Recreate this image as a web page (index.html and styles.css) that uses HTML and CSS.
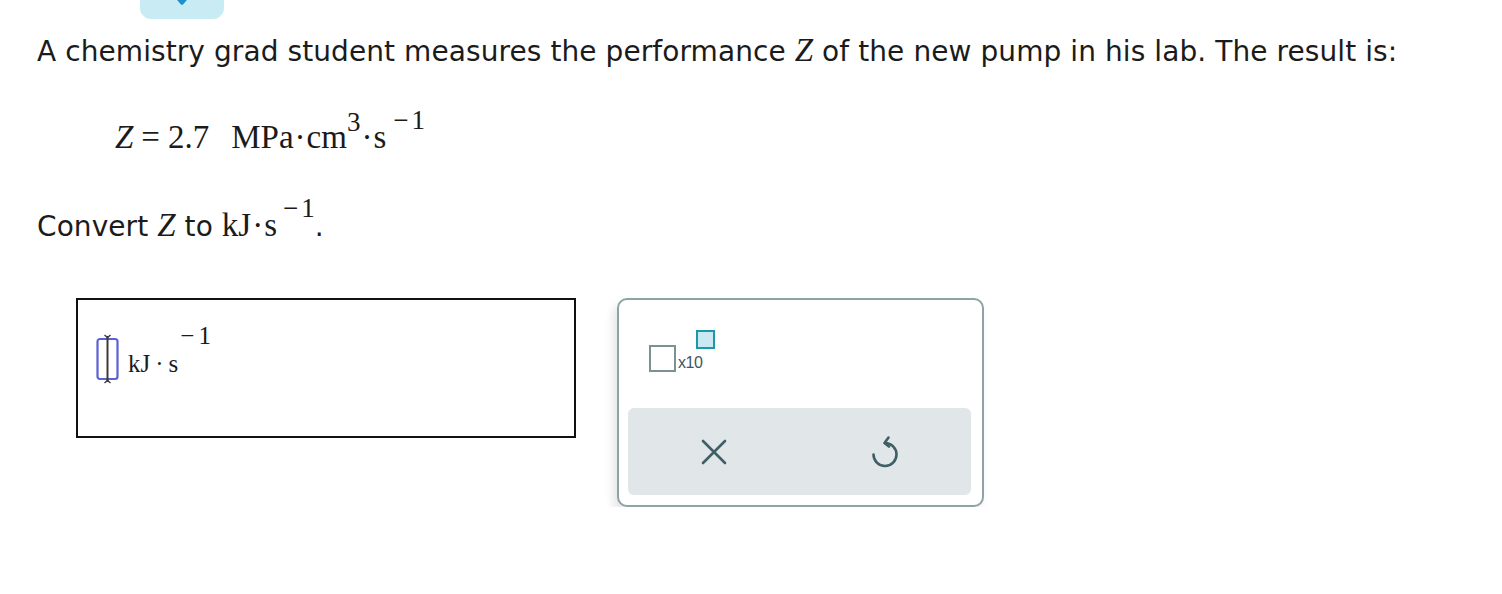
FILE: index.html
```html
<!DOCTYPE html>
<html>
<head>
<meta charset="utf-8">
<link rel="stylesheet" href="styles.css">
</head>
<body>
<div class="tab">
  <svg class="chev" width="20" height="6" viewBox="0 0 20 6"><path d="M4 -4 L10 3 L16 -4" fill="none" stroke="#1b93c8" stroke-width="3.5" stroke-linecap="round" stroke-linejoin="round"/></svg>
</div>
<div class="content">
  <p class="q line1">A chemistry grad student measures the performance <span class="mi">Z</span> of the new pump in his lab. The result is:</p>
  <div class="eq"><span class="eqi">Z</span><span class="rel">=</span>2.7<span class="sp"></span>MPa<span class="dot">·</span>cm<sup class="s3">3</sup><span class="dot">·</span>s<sup class="sm"><span class="minus">−</span>1</sup></div>
  <p class="q line2">Convert <span class="mi">Z</span> to <span class="unit">kJ<span class="dot">·</span>s<sup class="sm2"><span class="minus">−</span>1</sup></span>.</p>
  <div class="work">
    <div class="answer">
      <svg class="cursor" width="26" height="56" viewBox="0 0 26 56">
        <rect x="2.5" y="7" width="20" height="40" rx="2.5" fill="#fff" stroke="#5b60d6" stroke-width="2.2"/>
        <line x1="12.5" y1="4" x2="12.5" y2="50" stroke="#3a3a3a" stroke-width="2"/>
        <path d="M9.5 3 L12.5 5.5 L15.5 3 M9.5 51 L12.5 48.5 L15.5 51" fill="none" stroke="#3a3a3a" stroke-width="1.4"/>
      </svg>
      <span class="aunit">kJ<span class="adot">·</span>s<sup class="asup"><span class="minus">−</span>1</sup></span>
    </div>
    <div class="palette">
      <div class="ptop">
        <button class="x10">
          <span class="bigsq"></span><span class="xt">x10</span><span class="smsq"></span>
        </button>
      </div>
      <div class="pbar">
        <button class="pbtn" aria-label="clear">
          <svg width="28" height="28" viewBox="0 0 28 28"><path d="M3 3 L25 25 M25 3 L3 25" stroke="#3f5f66" stroke-width="2.6" stroke-linecap="round"/></svg>
        </button>
        <button class="pbtn" aria-label="undo">
          <svg width="30" height="36" viewBox="0 0 30 36"><path d="M15 9 A11.5 11.5 0 1 1 3.5 20.5" fill="none" stroke="#3f5f66" stroke-width="2.6" stroke-linecap="round"/><path d="M18.5 3.5 L14.5 9 L19 12.5" fill="none" stroke="#3f5f66" stroke-width="2.6" stroke-linecap="round" stroke-linejoin="round"/></svg>
        </button>
      </div>
    </div>
  </div>
</div>
</body>
</html>
```
FILE: styles.css
```css
* { box-sizing: border-box; }
body {
  margin: 0;
  background: #fff;
  font-family: "DejaVu Sans", Verdana, sans-serif;
  color: #1b1b1b;
}
.tab {
  margin-left: 140px;
  width: 84px;
  height: 19px;
  background: #c9ecf4;
  border-radius: 0 0 11px 11px;
  display: flex;
  justify-content: center;
}
.chev { display: block; }
.content { padding-left: 37px; }
.q {
  margin: 0;
  font-size: 28px;
  line-height: 34px;
  letter-spacing: 0.08px;
  white-space: nowrap;
}
.line1 { margin-top: 16px; }
.mi {
  font-family: "Liberation Serif", serif;
  font-style: italic;
  font-size: 33px;
  line-height: 0;
  letter-spacing: 0;
}
.eq {
  margin: 48px 0 0 78px;
  font-family: "Liberation Serif", serif;
  font-size: 33px;
  line-height: 40px;
  white-space: nowrap;
}
.eqi { font-style: italic; }
.rel { padding: 0 8px 0 8px; }
.sp { display: inline-block; width: 22px; }
.dot { padding: 0 1px; }
.minus { margin-right: 3px; }
.s3 { font-size: 27px; line-height: 0; vertical-align: 17px; margin-left: 0; }
.sm { font-size: 27px; line-height: 0; vertical-align: 19px; margin-left: 7px; }
.line2 { margin-top: 51px; }
.unit {
  font-family: "Liberation Serif", serif;
  font-size: 33px;
  line-height: 0;
  letter-spacing: 0;
}
.unit .dot { padding: 0 1px; }
.sm2 { font-size: 27px; line-height: 0; vertical-align: 19px; margin-left: 6px; }
.work {
  margin-top: 54px;
  margin-left: 39px;
  display: flex;
  gap: 41px;
  align-items: flex-start;
}
.answer {
  width: 500px;
  height: 140px;
  border: 2px solid #111;
  display: flex;
  align-items: flex-start;
  padding: 32px 0 0 17px;
}
.cursor { display: block; }
.aunit {
  font-family: "Liberation Serif", serif;
  font-size: 25px;
  line-height: 30px;
  margin-top: 4px;
  margin-left: 7px;
  white-space: nowrap;
}
.adot { padding: 0 5px; }
.asup { font-size: 25px; line-height: 0; vertical-align: 28px; margin-left: 2px; }
.asup .minus { margin-right: 4px; }
.palette {
  width: 367px;
  height: 209px;
  border: 2px solid #8fa2a5;
  border-radius: 10px;
  box-shadow: -4px 6px 10px rgba(0, 0, 0, 0.10);
  padding: 0 11px 10px 9px;
  display: flex;
  flex-direction: column;
  background: #fff;
}
.ptop { height: 108px; padding: 30px 0 0 21px; flex: none; }
button {
  font: inherit;
  background: none;
  border: 0;
  padding: 0;
  cursor: pointer;
}
.x10 {
  display: flex;
  align-items: flex-start;
  height: 44px;
}
.bigsq {
  width: 27px;
  height: 27px;
  border: 2.5px solid #7d9093;
  margin-top: 15px;
}
.xt {
  font-family: "Liberation Sans", Arial, sans-serif;
  font-size: 16px;
  color: #435659;
  margin-top: 24px;
  margin-left: 2px;
  letter-spacing: -0.5px;
}
.smsq {
  width: 19px;
  height: 19px;
  border: 2.5px solid #1a99a7;
  background: #cbe9f2;
  margin-left: -6px;
}
.pbar {
  flex: 1;
  background: #e1e6e8;
  border-radius: 6px;
  display: flex;
}
.pbtn {
  flex: 1;
  display: flex;
  align-items: center;
  justify-content: center;
}
.pbtn svg { display: block; }
```
